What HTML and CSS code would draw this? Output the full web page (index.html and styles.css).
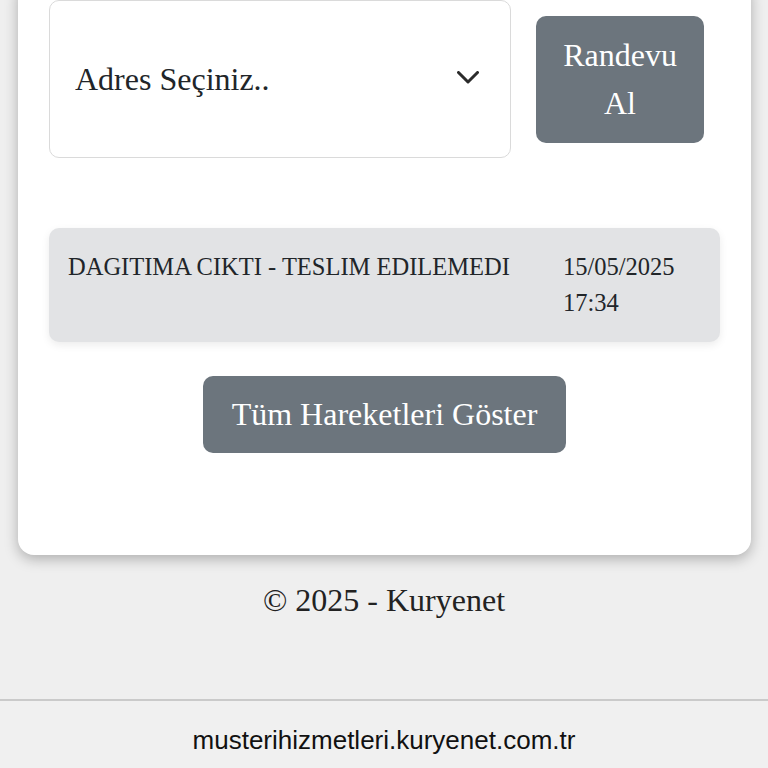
FILE: index.html
```html
<!DOCTYPE html>
<html lang="tr">
<head>
  <meta charset="UTF-8">
  <meta name="viewport" content="width=device-width, initial-scale=1.0">
  <title>Kuryenet - Gönderi Takip</title>
  <link rel="stylesheet" href="styles.css">
</head>
<body>

  <div class="card">
    <div class="appointment">
      <div class="select-wrap">
        <select class="address-select">
          <option>Adres Seçiniz..</option>
        </select>
        <svg class="chevron" width="22" height="14" viewBox="0 0 22 14">
          <polyline points="1.5,1.5 11,11 20.5,1.5" fill="none" stroke="#2b2b2b" stroke-width="3" stroke-linecap="round" stroke-linejoin="round"/>
        </svg>
      </div>
      <button class="btn btn-appointment">Randevu Al</button>
    </div>

    <div class="movement">
      <div class="movement-text">DAGITIMA CIKTI - TESLIM EDILEMEDI</div>
      <div class="movement-date">15/05/2025 17:34</div>
    </div>

    <div class="actions">
      <button class="btn btn-all">Tüm Hareketleri Göster</button>
    </div>
  </div>

  <footer class="copyright">© 2025 - Kuryenet</footer>

  <div class="url-bar">musterihizmetleri.kuryenet.com.tr</div>

</body>
</html>
```

FILE: styles.css
```css
body, html {
  margin: 0;
  padding: 0;
  font-family: "Liberation Serif", "Times New Roman", serif;
  background-color: #efefef;
  color: #212529;
}

.card {
  margin: -20px 17px 0 18px;
  padding: 20px 31px 102px;
  background-color: #fff;
  border-radius: 16px;
  box-shadow: 0 4px 14px rgba(0, 0, 0, 0.28);
}

.appointment {
  display: flex;
  align-items: center;
  gap: 25px;
}

.select-wrap {
  position: relative;
  width: 462px;
}

.address-select {
  appearance: none;
  -webkit-appearance: none;
  display: block;
  width: 100%;
  height: 158px;
  margin: 0;
  padding: 0 60px 0 25px;
  border: 1.5px solid #dadada;
  border-radius: 10px;
  background-color: #fff;
  font-family: inherit;
  font-size: 32px;
  color: #212529;
}

.chevron {
  position: absolute;
  right: 32px;
  top: 71px;
}

.btn {
  border: none;
  border-radius: 10px;
  background-color: #6c757d;
  color: #fff;
  font-family: inherit;
  font-size: 32px;
  line-height: 48px;
  cursor: pointer;
}

.btn-appointment {
  width: 168px;
  height: 127px;
  padding: 14px 20px;
}

.movement {
  display: flex;
  margin-top: 70px;
  padding: 21px 19px;
  background-color: #e2e3e5;
  border-radius: 10px;
  box-shadow: 0 3px 8px rgba(0, 0, 0, 0.08);
  font-size: 24.5px;
  line-height: 36px;
}

.movement-text {
  flex: 1;
}

.movement-date {
  width: 138px;
}

.actions {
  margin-top: 34px;
  text-align: center;
}

.btn-all {
  padding: 14px 29px 15px;
}

.copyright {
  margin-top: 21px;
  text-align: center;
  font-size: 32px;
  line-height: 48px;
  color: #222;
}

.url-bar {
  margin-top: 75px;
  height: 43px;
  padding-top: 24px;
  border-top: 2px solid #cacaca;
  background-color: #f0f0f0;
  text-align: center;
  font-family: "Liberation Sans", Arial, sans-serif;
  font-size: 26px;
  line-height: 30px;
  color: #111;
}
```
